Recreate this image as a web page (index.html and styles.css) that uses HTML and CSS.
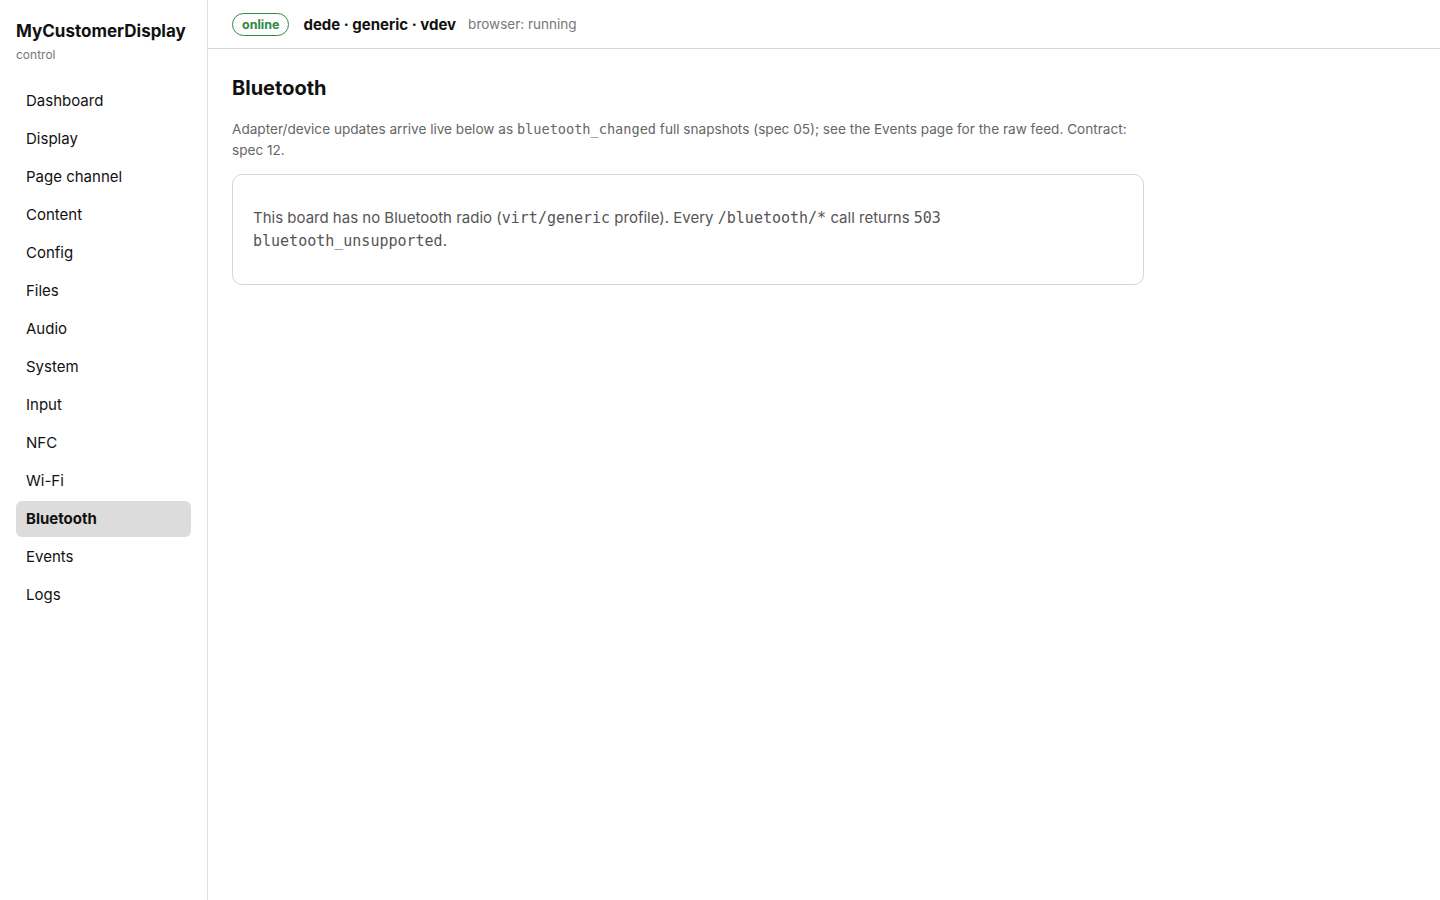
FILE: index.html
```html
<!DOCTYPE html>
<html lang="en">
<head>
  <meta charset="UTF-8">
  <title>MyCustomerDisplay · Bluetooth</title>
  <link rel="stylesheet" href="styles.css">
</head>
<body>
  <div class="app">
    <!-- left navigation -->
    <aside class="sidebar">
      <div class="brand">
        <div class="brand-name">MyCustomerDisplay</div>
        <div class="brand-sub">control</div>
      </div>
      <ul class="nav">
        <li><a href="#">Dashboard</a></li>
        <li><a href="#">Display</a></li>
        <li><a href="#">Page channel</a></li>
        <li><a href="#">Content</a></li>
        <li><a href="#">Config</a></li>
        <li><a href="#">Files</a></li>
        <li><a href="#">Audio</a></li>
        <li><a href="#">System</a></li>
        <li><a href="#">Input</a></li>
        <li><a href="#">NFC</a></li>
        <li><a href="#">Wi-Fi</a></li>
        <li class="active"><a href="#">Bluetooth</a></li>
        <li><a href="#">Events</a></li>
        <li><a href="#">Logs</a></li>
      </ul>
    </aside>

    <div class="main">
      <!-- status bar -->
      <header class="topbar">
        <span class="badge">online</span>
        <span class="device">dede · generic · vdev</span>
        <span class="browser">browser: running</span>
      </header>

      <section class="page">
        <h1>Bluetooth</h1>
        <p class="lead">Adapter/device updates arrive live below as <code>bluetooth_changed</code> full snapshots (spec 05); see the Events page for the raw feed. Contract: spec 12.</p>
        <div class="card">
          <p>This board has no Bluetooth radio (<code>virt/generic</code> profile). Every <code>/bluetooth/*</code> call returns <code>503 bluetooth_unsupported</code>.</p>
        </div>
      </section>
    </div>
  </div>
</body>
</html>
```
FILE: styles.css
```css
body{
  margin:0;
  font-family: Inter, "Liberation Sans", sans-serif;
  font-size:15px;
  color:#111;
  background:#fff;
}
ul,li{margin:0;padding:0;list-style:none;}
a{color:inherit;text-decoration:none;}
code{font-family:"DejaVu Sans Mono", "Liberation Mono", monospace;font-size:1em;line-height:1;}

.app{
  display:flex;
  min-height:100vh;
}

/* sidebar */
.sidebar{
  box-sizing:border-box;
  width:208px;
  flex:none;
  padding:21px 16px;
  border-right:1px solid #dedede;
}
.brand{
  margin-bottom:20px;
}
.brand-name{
  font-size:17px;
  font-weight:700;
  line-height:21px;
}
.brand-sub{
  margin-top:5px;
  font-size:12px;
  line-height:16px;
  color:#777;
}
.nav{
  display:flex;
  flex-direction:column;
  gap:2px;
}
.nav a{
  display:block;
  height:36px;
  line-height:36px;
  padding:0 10px;
  border-radius:6px;
  font-size:15px;
}
.nav li.active a{
  background:#dcdcdc;
  font-weight:700;
}

/* main column */
.main{
  flex:1;
  min-width:0;
}
.topbar{
  display:flex;
  align-items:center;
  gap:12px;
  height:49px;
  padding:0 24px;
  border-bottom:1px solid #d6d6d6;
  box-sizing:border-box;
}
.badge{
  margin-right:2px;
  padding:3px 9px;
  border:1px solid #2f8a45;
  border-radius:999px;
  color:#2f8a45;
  font-size:12.5px;
  font-weight:700;
  line-height:15px;
}
.device{
  font-size:15px;
  font-weight:700;
}
.browser{
  font-size:13.5px;
  color:#777;
}

.page{
  max-width:912px;
  padding:24px;
}
.page h1{
  margin:1px 0 17px;
  font-size:20px;
  line-height:28px;
}
.lead{
  margin:0 0 13px;
  font-size:13.6px;
  line-height:21px;
  color:#666;
}
.lead code{font-size:13.6px;}
.card{
  padding:20px;
  border:1px solid #d6d6d6;
  border-radius:10px;
}
.card p{
  margin:11px 0 12px;
  font-size:15px;
  line-height:23px;
  color:#555;
}
```
